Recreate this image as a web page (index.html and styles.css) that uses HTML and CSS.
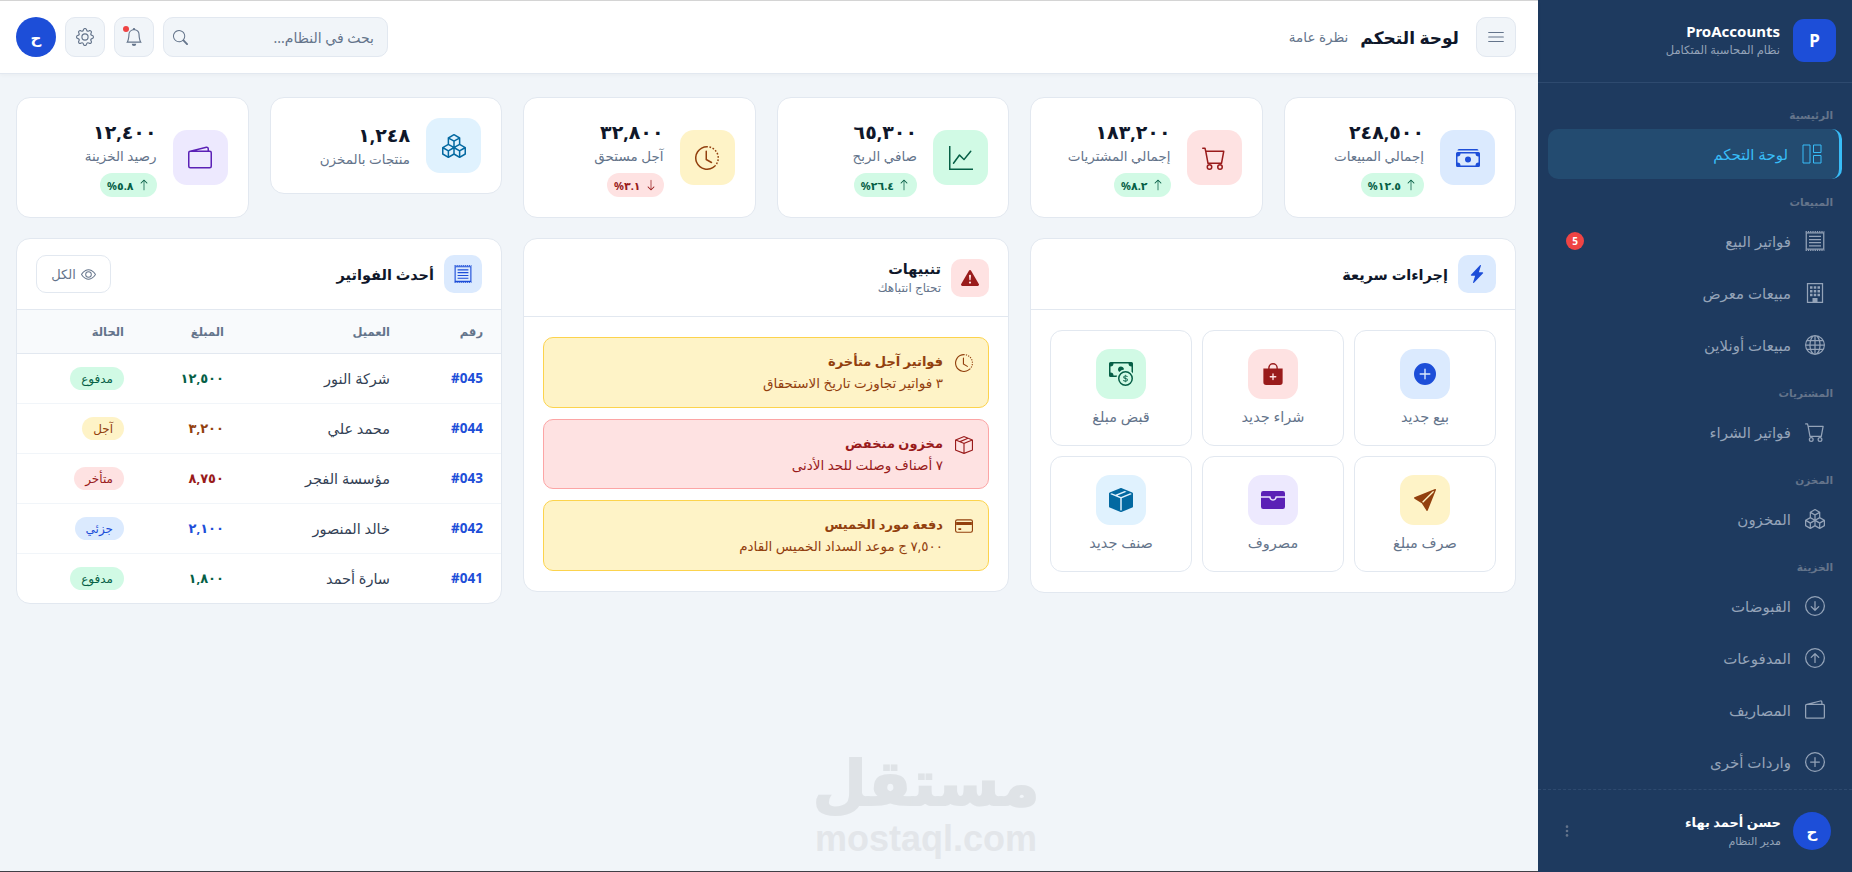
FILE: index.html
```html
<!DOCTYPE html>
<html lang="ar" dir="rtl">
<head>
  <meta charset="UTF-8">
  <meta name="viewport" content="width=device-width, initial-scale=1.0">
  <title>ProAccounts - لوحة التحكم</title>
  <link rel="stylesheet" href="styles.css">
</head>
<body>
  <!-- أيقونات -->
  <svg class="icon-defs" xmlns="http://www.w3.org/2000/svg">
    <symbol id="i-layout" viewBox="0 0 20 20"><path fill="none" stroke="currentColor" d="M1 1h7v18H1zM11.5 1H19v7.5h-7.5zM11.5 11.5H19V19h-7.5z"/></symbol>
    <symbol id="i-receipt" viewBox="0 0 16 16"><path fill="none" stroke="currentColor" d="M1 1.5h14v13H1z"/><path fill="none" stroke="currentColor" stroke-width="1.2" stroke-dasharray="1 .8" d="M.5 .6h15M.5 15.4h15"/><path fill="none" stroke="currentColor" d="M3.2 4.3h9.6M3.2 6.8h9.6M3.2 9.3h9.6M3.2 11.8h9.6"/></symbol>
    <symbol id="i-building" viewBox="0 0 16 16"><path fill="none" stroke="currentColor" d="M2 .5h12v15H2z"/><path fill="currentColor" d="M4 2.5h2v2H4zM7 2.5h2v2H7zM10 2.5h2v2h-2zM4 5.5h2v2H4zM7 5.5h2v2H7zM10 5.5h2v2h-2zM4 8.5h2v2H4zM7 8.5h2v2H7zM10 8.5h2v2h-2zM6 12h4v3.5H6z"/></symbol>
    <symbol id="i-globe" viewBox="0 0 16 16"><path fill="currentColor" d="M0 8a8 8 0 1 1 16 0A8 8 0 0 1 0 8zm7.5-6.923c-.67.204-1.335.82-1.887 1.855A7.97 7.97 0 0 0 5.145 4H7.5V1.077zM4.09 4a9.267 9.267 0 0 1 .64-1.539 6.7 6.7 0 0 1 .597-.933A7.025 7.025 0 0 0 2.255 4H4.09zm-.582 3.5c.03-.877.138-1.718.312-2.5H1.674a6.958 6.958 0 0 0-.656 2.5h2.49zM4.847 5a12.5 12.5 0 0 0-.338 2.5H7.5V5H4.847zM8.5 5v2.5h2.99a12.495 12.495 0 0 0-.337-2.5H8.5zM4.51 8.5a12.5 12.5 0 0 0 .337 2.5H7.5V8.5H4.51zm3.99 0V11h2.653c.187-.765.306-1.608.338-2.5H8.5zM5.145 12c.138.386.295.744.468 1.068.552 1.035 1.218 1.65 1.887 1.855V12H5.145zm.182 2.472a6.696 6.696 0 0 1-.597-.933A9.268 9.268 0 0 1 4.09 12H2.255a7.024 7.024 0 0 0 3.072 2.472zM3.82 11a13.652 13.652 0 0 1-.312-2.5h-2.49c.062.89.291 1.733.656 2.5H3.82zm6.853 3.472A7.024 7.024 0 0 0 13.745 12H11.91a9.27 9.27 0 0 1-.64 1.539 6.688 6.688 0 0 1-.597.933zM8.5 12v2.923c.67-.204 1.335-.82 1.887-1.855.173-.324.33-.682.468-1.068H8.5zm3.68-1h2.146c.365-.767.594-1.61.656-2.5h-2.49a13.65 13.65 0 0 1-.312 2.5zm2.802-3.5a6.959 6.959 0 0 0-.656-2.5H12.18c.174.782.282 1.623.312 2.5h2.49zM11.27 2.461c.247.464.462.98.64 1.539h1.835a7.024 7.024 0 0 0-3.072-2.472c.218.284.418.598.597.933zM10.855 4a7.966 7.966 0 0 0-.468-1.068C9.835 1.897 9.17 1.282 8.5 1.077V4h2.355z"/></symbol>
    <symbol id="i-cart" viewBox="0 0 16 16"><path fill="currentColor" d="M0 1.5A.5.5 0 0 1 .5 1H2a.5.5 0 0 1 .485.379L2.89 3H14.5a.5.5 0 0 1 .491.592l-1.5 8A.5.5 0 0 1 13 12H4a.5.5 0 0 1-.491-.408L2.01 3.607 1.61 2H.5a.5.5 0 0 1-.5-.5zM3.102 4l1.313 7h8.17l1.313-7H3.102zM5 12a2 2 0 1 0 0 4 2 2 0 0 0 0-4zm7 0a2 2 0 1 0 0 4 2 2 0 0 0 0-4zm-7 1a1 1 0 1 1 0 2 1 1 0 0 1 0-2zm7 0a1 1 0 1 1 0 2 1 1 0 0 1 0-2z"/></symbol>
    <symbol id="i-boxes" viewBox="0 0 16 16"><path fill="currentColor" d="M7.752.066a.5.5 0 0 1 .496 0l3.75 2.143a.5.5 0 0 1 .252.434v3.995l3.498 2A.5.5 0 0 1 16 9.07v4.286a.5.5 0 0 1-.252.434l-3.75 2.143a.5.5 0 0 1-.496 0l-3.502-2-3.502 2.001a.5.5 0 0 1-.496 0l-3.75-2.143A.5.5 0 0 1 0 13.357V9.071a.5.5 0 0 1 .252-.434L3.75 6.638V2.643a.5.5 0 0 1 .252-.434L7.752.066ZM4.25 7.504 1.508 9.071l2.742 1.567 2.742-1.567L4.25 7.504ZM7.5 9.933l-2.75 1.571v3.134l2.75-1.571V9.933Zm1 3.134 2.75 1.571v-3.134L8.5 9.933v3.134Zm.508-3.996 2.742 1.567 2.742-1.567-2.742-1.567-2.742 1.567Zm2.242-2.433V3.504L8.5 5.076V8.21l2.75-1.572ZM7.5 8.21V5.076L4.75 3.504v3.134L7.5 8.21ZM5.258 2.643 8 4.21l2.742-1.567L8 1.076 5.258 2.643ZM15 9.933l-2.75 1.571v3.134L15 13.067V9.933ZM3.75 14.638v-3.134L1 9.933v3.134l2.75 1.571Z"/></symbol>
    <symbol id="i-down-circle" viewBox="0 0 16 16"><path fill="currentColor" d="M1 8a7 7 0 1 0 14 0A7 7 0 0 0 1 8zm15 0A8 8 0 1 1 0 8a8 8 0 0 1 16 0zM8.5 4.5a.5.5 0 0 0-1 0v5.793L5.354 8.146a.5.5 0 1 0-.708.708l3 3a.5.5 0 0 0 .708 0l3-3a.5.5 0 0 0-.708-.708L8.5 10.293V4.5z"/></symbol>
    <symbol id="i-up-circle" viewBox="0 0 16 16"><path fill="currentColor" d="M1 8a7 7 0 1 0 14 0A7 7 0 0 0 1 8zm15 0A8 8 0 1 1 0 8a8 8 0 0 1 16 0zm-7.5 3.5a.5.5 0 0 1-1 0V5.707L5.354 7.854a.5.5 0 1 1-.708-.708l3-3a.5.5 0 0 1 .708 0l3 3a.5.5 0 0 1-.708.708L8.5 5.707V11.5z"/></symbol>
    <symbol id="i-plus-circle" viewBox="0 0 16 16"><path fill="currentColor" d="M8 15A7 7 0 1 1 8 1a7 7 0 0 1 0 14zm0 1A8 8 0 1 0 8 0a8 8 0 0 0 0 16z"/><path fill="currentColor" d="M8 4a.5.5 0 0 1 .5.5v3h3a.5.5 0 0 1 0 1h-3v3a.5.5 0 0 1-1 0v-3h-3a.5.5 0 0 1 0-1h3v-3A.5.5 0 0 1 8 4z"/></symbol>
    <symbol id="i-wallet" viewBox="0 0 16 16"><path fill="currentColor" d="M12.136.326A1.5 1.5 0 0 1 14 1.78V3h.5A1.5 1.5 0 0 1 16 4.5v9a1.5 1.5 0 0 1-1.5 1.5h-13A1.5 1.5 0 0 1 0 13.5v-9a1.5 1.5 0 0 1 1.432-1.499L12.136.326zM5.562 3H13V1.78a.5.5 0 0 0-.621-.484L5.562 3zM1.5 4a.5.5 0 0 0-.5.5v9a.5.5 0 0 0 .5.5h13a.5.5 0 0 0 .5-.5v-9a.5.5 0 0 0-.5-.5h-13z"/></symbol>
    <symbol id="i-bell" viewBox="0 0 16 16"><path fill="currentColor" d="M8 16a2 2 0 0 0 2-2H6a2 2 0 0 0 2 2zM8 1.918l-.797.161A4.002 4.002 0 0 0 4 6c0 .628-.134 2.197-.459 3.742-.16.767-.376 1.566-.663 2.258h10.244c-.287-.692-.502-1.49-.663-2.258C12.134 8.197 12 6.628 12 6a4.002 4.002 0 0 0-3.203-3.92L8 1.917zM14.22 12c.223.447.481.801.78 1H1c.299-.199.557-.553.78-1C2.68 10.2 3 6.88 3 6c0-2.42 1.72-4.44 4.005-4.901a1 1 0 1 1 1.99 0A5.002 5.002 0 0 1 13 6c0 .88.32 4.2 1.22 6z"/></symbol>
    <symbol id="i-gear" viewBox="0 0 16 16"><path fill="currentColor" d="M8 4.754a3.246 3.246 0 1 0 0 6.492 3.246 3.246 0 0 0 0-6.492zM5.754 8a2.246 2.246 0 1 1 4.492 0 2.246 2.246 0 0 1-4.492 0z"/><path fill="currentColor" d="M9.796 1.343c-.527-1.79-3.065-1.79-3.592 0l-.094.319a.873.873 0 0 1-1.255.52l-.292-.16c-1.64-.892-3.433.902-2.54 2.541l.159.292a.873.873 0 0 1-.52 1.255l-.319.094c-1.79.527-1.79 3.065 0 3.592l.319.094a.873.873 0 0 1 .52 1.255l-.16.292c-.892 1.64.901 3.434 2.541 2.54l.292-.159a.873.873 0 0 1 1.255.52l.094.319c.527 1.79 3.065 1.79 3.592 0l.094-.319a.873.873 0 0 1 1.255-.52l.292.16c1.64.893 3.434-.902 2.54-2.541l-.159-.292a.873.873 0 0 1 .52-1.255l.319-.094c1.79-.527 1.79-3.065 0-3.592l-.319-.094a.873.873 0 0 1-.52-1.255l.16-.292c.893-1.64-.902-3.433-2.541-2.54l-.292.159a.873.873 0 0 1-1.255-.52l-.094-.319zm-2.633.283c.246-.835 1.428-.835 1.674 0l.094.319a1.873 1.873 0 0 0 2.693 1.115l.291-.16c.764-.415 1.6.42 1.184 1.185l-.159.292a1.873 1.873 0 0 0 1.116 2.692l.318.094c.835.246.835 1.428 0 1.674l-.319.094a1.873 1.873 0 0 0-1.115 2.693l.16.291c.415.764-.42 1.6-1.185 1.184l-.291-.159a1.873 1.873 0 0 0-2.693 1.116l-.094.318c-.246.835-1.428.835-1.674 0l-.094-.319a1.873 1.873 0 0 0-2.692-1.115l-.292.16c-.764.415-1.6-.42-1.184-1.185l.159-.291A1.873 1.873 0 0 0 1.945 8.93l-.319-.094c-.835-.246-.835-1.428 0-1.674l.319-.094A1.873 1.873 0 0 0 3.06 4.377l-.16-.292c-.415-.764.42-1.6 1.185-1.184l.292.159a1.873 1.873 0 0 0 2.692-1.115l.094-.319z"/></symbol>
    <symbol id="i-search" viewBox="0 0 16 16"><path fill="currentColor" d="M11.742 10.344a6.5 6.5 0 1 0-1.397 1.398h-.001c.03.04.062.078.098.115l3.85 3.85a1 1 0 0 0 1.415-1.414l-3.85-3.85a1.007 1.007 0 0 0-.115-.1zM12 6.5a5.5 5.5 0 1 1-11 0 5.5 5.5 0 0 1 11 0z"/></symbol>
    <symbol id="i-list" viewBox="0 0 16 16"><path fill="currentColor" d="M1 12a.5.5 0 0 1 .5-.5h13a.5.5 0 0 1 0 1h-13A.5.5 0 0 1 1 12zm0-4a.5.5 0 0 1 .5-.5h13a.5.5 0 0 1 0 1h-13A.5.5 0 0 1 1 8zm0-4a.5.5 0 0 1 .5-.5h13a.5.5 0 0 1 0 1h-13A.5.5 0 0 1 1 4z"/></symbol>
    <symbol id="i-graph" viewBox="0 0 16 16"><path fill="currentColor" d="M0 0h1v15h15v1H0V0Zm14.817 3.113a.5.5 0 0 1 .07.704l-4.5 5.5a.5.5 0 0 1-.74.037L7.06 6.767l-3.656 5.027a.5.5 0 0 1-.808-.588l4-5.5a.5.5 0 0 1 .758-.06l2.609 2.61 4.15-5.073a.5.5 0 0 1 .704-.07Z"/></symbol>
    <symbol id="i-clock" viewBox="0 0 16 16"><path fill="currentColor" d="M8.515 1.019A7 7 0 0 0 8 1V0a8 8 0 0 1 .589.022l-.074.997zm2.004.45a7.003 7.003 0 0 0-.985-.299l.219-.976c.383.086.76.2 1.126.342l-.36.933zm1.37.71a7.01 7.01 0 0 0-.439-.27l.493-.87a8.025 8.025 0 0 1 .979.654l-.615.789a6.996 6.996 0 0 0-.418-.302zm1.834 1.79a6.99 6.99 0 0 0-.653-.796l.724-.69c.27.285.52.59.747.91l-.818.576zm.744 1.352a7.08 7.08 0 0 0-.214-.468l.893-.45a7.976 7.976 0 0 1 .45 1.088l-.95.313a7.023 7.023 0 0 0-.179-.483zm.53 2.507a6.991 6.991 0 0 0-.1-1.025l.985-.17c.067.386.106.778.116 1.17l-1 .025zm-.131 1.538c.033-.17.06-.339.081-.51l.993.123a7.957 7.957 0 0 1-.23 1.155l-.964-.267c.046-.165.086-.332.12-.501zm-.952 2.379c.184-.29.346-.594.486-.908l.914.405c-.16.36-.345.706-.555 1.038l-.845-.535zm-.964 1.205c.122-.122.239-.248.35-.378l.758.653a8.073 8.073 0 0 1-.401.432l-.707-.707z"/><path fill="currentColor" d="M8 1a7 7 0 1 0 4.95 11.95l.707.707A8.001 8.001 0 1 1 8 0v1z"/><path fill="currentColor" d="M7.5 3a.5.5 0 0 1 .5.5v5.21l3.248 1.856a.5.5 0 0 1-.496.868l-3.5-2A.5.5 0 0 1 7 9V3.5a.5.5 0 0 1 .5-.5z"/></symbol>
    <symbol id="i-cash" viewBox="0 0 16 16"><path fill="currentColor" d="M1 3a1 1 0 0 1 1-1h12a1 1 0 0 1 1 1H1zm7 8a2 2 0 1 0 0-4 2 2 0 0 0 0 4z"/><path fill="currentColor" d="M0 5a1 1 0 0 1 1-1h14a1 1 0 0 1 1 1v8a1 1 0 0 1-1 1H1a1 1 0 0 1-1-1V5zm3 0a2 2 0 0 1-2 2v4a2 2 0 0 1 2 2h10a2 2 0 0 1 2-2V7a2 2 0 0 1-2-2H3z"/></symbol>
    <symbol id="i-warning" viewBox="0 0 16 16"><path fill="currentColor" d="M8.982 1.566a1.13 1.13 0 0 0-1.96 0L.165 13.233c-.457.778.091 1.767.98 1.767h13.713c.889 0 1.438-.99.98-1.767L8.982 1.566zM8 5c.535 0 .954.462.9.995l-.35 3.507a.552.552 0 0 1-1.1 0L7.1 5.995A.905.905 0 0 1 8 5zm.002 6a1 1 0 1 1 0 2 1 1 0 0 1 0-2z"/></symbol>
    <symbol id="i-bolt" viewBox="0 0 16 16"><path fill="currentColor" d="M11.251.068a.5.5 0 0 1 .227.58L9.677 6.5H13a.5.5 0 0 1 .364.843l-8 8.5a.5.5 0 0 1-.842-.49L6.323 9.5H3a.5.5 0 0 1-.364-.843l8-8.5a.5.5 0 0 1 .615-.09z"/></symbol>
    <symbol id="i-plus-fill" viewBox="0 0 16 16"><path fill="currentColor" d="M16 8A8 8 0 1 1 0 8a8 8 0 0 1 16 0zM8.5 4.5a.5.5 0 0 0-1 0v3h-3a.5.5 0 0 0 0 1h3v3a.5.5 0 0 0 1 0v-3h3a.5.5 0 0 0 0-1h-3v-3z"/></symbol>
    <symbol id="i-bag" viewBox="0 0 16 16"><path fill="currentColor" fill-rule="evenodd" d="M10.5 3.5a2.5 2.5 0 0 0-5 0V4h5v-.5zm1 0V4H15v10a2 2 0 0 1-2 2H3a2 2 0 0 1-2-2V4h3.5v-.5a3.5 3.5 0 1 1 7 0zM8.5 8a.5.5 0 0 0-1 0v1.5H6a.5.5 0 0 0 0 1h1.5V12a.5.5 0 0 0 1 0v-1.5H10a.5.5 0 0 0 0-1H8.5V8z"/></symbol>
    <symbol id="i-coin" viewBox="0 0 16 16"><path fill="currentColor" fill-rule="evenodd" d="M11 15a4 4 0 1 0 0-8 4 4 0 0 0 0 8zm5-4a5 5 0 1 1-10 0 5 5 0 0 1 10 0z"/><path fill="currentColor" d="M9.438 11.944c.047.596.518 1.06 1.363 1.116v.44h.375v-.443c.875-.061 1.386-.529 1.386-1.207 0-.618-.39-.936-1.09-1.1l-.296-.07v-1.2c.376.043.614.248.671.532h.658c-.047-.575-.54-1.024-1.329-1.073V8.5h-.375v.45c-.747.073-1.255.522-1.255 1.158 0 .562.378.92 1.007 1.066l.248.061v1.272c-.384-.058-.639-.27-.696-.563h-.668zm1.36-1.354c-.369-.085-.569-.26-.569-.522 0-.294.216-.514.572-.578v1.1h-.003zm.432.746c.449.104.655.272.655.569 0 .339-.257.571-.709.635v-1.195l.054.012z"/><path fill="currentColor" d="M1 0a1 1 0 0 0-1 1v8a1 1 0 0 0 1 1h4.083c.058-.344.145-.678.258-1H3a2 2 0 0 0-2-2V3a2 2 0 0 0 2-2h10a2 2 0 0 0 2 2v3.528c.38.34.717.728 1 1.154V1a1 1 0 0 0-1-1H1z"/><path fill="currentColor" d="M9.998 5.083 10 5a2 2 0 1 0-3.132 1.65 5.982 5.982 0 0 1 3.13-1.567z"/></symbol>
    <symbol id="i-send" viewBox="0 0 16 16"><path fill="currentColor" d="M15.964.686a.5.5 0 0 0-.65-.65L.767 5.855H.766l-.452.18a.5.5 0 0 0-.082.887l.41.26.001.002 4.995 3.178 3.178 4.995.002.002.26.41a.5.5 0 0 0 .886-.083l6-15Zm-1.833 1.89L6.637 10.07l-.215-.338a.5.5 0 0 0-.154-.154l-.338-.215 7.494-7.494 1.178-.471-.47 1.178Z"/></symbol>
    <symbol id="i-wallet-fill" viewBox="0 0 16 16"><path fill="currentColor" d="M1.5 2A1.5 1.5 0 0 0 0 3.5v2h6a.5.5 0 0 1 .5.5c0 .253.08.644.306.958.207.288.557.542 1.194.542.637 0 .987-.254 1.194-.542.226-.314.306-.705.306-.958a.5.5 0 0 1 .5-.5h6v-2A1.5 1.5 0 0 0 14.5 2h-13z"/><path fill="currentColor" d="M16 6.5h-5.551a2.678 2.678 0 0 1-.443 1.042C9.613 8.088 8.963 8.5 8 8.5c-.963 0-1.613-.412-2.006-.958A2.679 2.679 0 0 1 5.551 6.5H0v6A1.5 1.5 0 0 0 1.5 14h13a1.5 1.5 0 0 0 1.5-1.5v-6z"/></symbol>
    <symbol id="i-box-fill" viewBox="0 0 16 16"><path fill="currentColor" fill-rule="evenodd" d="M15.528 2.973a.75.75 0 0 1 .472.696v8.662a.75.75 0 0 1-.472.696l-7.25 2.9a.75.75 0 0 1-.557 0l-7.25-2.9A.75.75 0 0 1 0 12.331V3.669a.75.75 0 0 1 .471-.696L7.443.184l.01-.003.268-.108a.75.75 0 0 1 .558 0l.269.108.01.003 6.97 2.789ZM10.404 2 4.25 4.461 1.846 3.5 1 3.839v.4l6.5 2.6v7.922l.5.2.5-.2V6.84l6.5-2.6v-.4l-.846-.339L8 5.961 5.596 5l6.154-2.461L10.404 2Z"/></symbol>
    <symbol id="i-box" viewBox="0 0 16 16"><path fill="currentColor" d="M8.186 1.113a.5.5 0 0 0-.372 0L1.846 3.5l2.404.961L10.404 2l-2.218-.887zm3.564 1.426L5.596 5 8 5.961 14.154 3.5l-2.404-.961zm3.25 1.7-6.5 2.6v7.922l6.5-2.6V4.24zM7.5 14.762V6.838L1 4.239v7.925l6.5 2.6zM7.443.184a1.5 1.5 0 0 1 1.114 0l7.129 2.852A.5.5 0 0 1 16 3.5v8.662a1 1 0 0 1-.629.928l-7.185 2.874a.5.5 0 0 1-.372 0L.63 13.09a1 1 0 0 1-.63-.928V3.5a.5.5 0 0 1 .314-.464L7.443.184z"/></symbol>
    <symbol id="i-card" viewBox="0 0 16 16"><path fill="currentColor" d="M14 3a1 1 0 0 1 1 1v8a1 1 0 0 1-1 1H2a1 1 0 0 1-1-1V4a1 1 0 0 1 1-1h12zM2 2a2 2 0 0 0-2 2v8a2 2 0 0 0 2 2h12a2 2 0 0 0 2-2V4a2 2 0 0 0-2-2H2z"/><path fill="currentColor" d="M1 4.5h14V7H1zM3 10h2.5v1.5H3z"/></symbol>
    <symbol id="i-eye" viewBox="0 0 16 16"><path fill="currentColor" d="M16 8s-3-5.5-8-5.5S0 8 0 8s3 5.5 8 5.5S16 8 16 8zM1.173 8a13.133 13.133 0 0 1 1.66-2.043C4.12 4.668 5.88 3.5 8 3.5c2.12 0 3.879 1.168 5.168 2.457A13.133 13.133 0 0 1 14.828 8c-.058.087-.122.183-.195.288-.335.48-.83 1.12-1.465 1.755C11.879 11.332 10.119 12.5 8 12.5c-2.12 0-3.879-1.168-5.168-2.457A13.134 13.134 0 0 1 1.172 8z"/><path fill="currentColor" d="M8 5.5a2.5 2.5 0 1 0 0 5 2.5 2.5 0 0 0 0-5zM4.5 8a3.5 3.5 0 1 1 7 0 3.5 3.5 0 0 1-7 0z"/></symbol>
    <symbol id="i-arrow-up" viewBox="0 0 16 16"><path fill="currentColor" d="M8 15a.5.5 0 0 0 .5-.5V2.707l3.146 3.147a.5.5 0 0 0 .708-.708l-4-4a.5.5 0 0 0-.708 0l-4 4a.5.5 0 1 0 .708.708L7.5 2.707V14.5a.5.5 0 0 0 .5.5z"/></symbol>
    <symbol id="i-arrow-down" viewBox="0 0 16 16"><path fill="currentColor" d="M8 1a.5.5 0 0 1 .5.5v11.793l3.146-3.147a.5.5 0 0 1 .708.708l-4 4a.5.5 0 0 1-.708 0l-4-4a.5.5 0 0 1 .708-.708L7.5 13.293V1.5A.5.5 0 0 1 8 1z"/></symbol>
    <symbol id="i-dots" viewBox="0 0 4 16"><circle cx="2" cy="3" r="1.5" fill="currentColor"/><circle cx="2" cy="8" r="1.5" fill="currentColor"/><circle cx="2" cy="13" r="1.5" fill="currentColor"/></symbol>
  </svg>

  <div class="app">
    <!-- القائمة الجانبية -->
    <aside class="sidebar">
      <div class="brand">
        <div class="brand-logo">P</div>
        <div class="brand-text">
          <div class="brand-name" dir="ltr">ProAccounts</div>
          <div class="brand-sub">نظام المحاسبة المتكامل</div>
        </div>
      </div>

      <nav class="nav">
        <div class="nav-label">الرئيسية</div>
        <a class="nav-item active"><svg class="nav-icon"><use href="#i-layout"/></svg><span>لوحة التحكم</span></a>

        <div class="nav-label">المبيعات</div>
        <a class="nav-item"><svg class="nav-icon"><use href="#i-receipt"/></svg><span>فواتير البيع</span><b class="nav-badge">5</b></a>
        <a class="nav-item"><svg class="nav-icon"><use href="#i-building"/></svg><span>مبيعات معرض</span></a>
        <a class="nav-item"><svg class="nav-icon"><use href="#i-globe"/></svg><span>مبيعات أونلاين</span></a>

        <div class="nav-label">المشتريات</div>
        <a class="nav-item"><svg class="nav-icon"><use href="#i-cart"/></svg><span>فواتير الشراء</span></a>

        <div class="nav-label">المخزن</div>
        <a class="nav-item"><svg class="nav-icon"><use href="#i-boxes"/></svg><span>المخزون</span></a>

        <div class="nav-label">الخزينة</div>
        <a class="nav-item"><svg class="nav-icon"><use href="#i-down-circle"/></svg><span>القبوضات</span></a>
        <a class="nav-item"><svg class="nav-icon"><use href="#i-up-circle"/></svg><span>المدفوعات</span></a>
        <a class="nav-item"><svg class="nav-icon"><use href="#i-wallet"/></svg><span>المصاريف</span></a>
        <a class="nav-item"><svg class="nav-icon"><use href="#i-plus-circle"/></svg><span>واردات أخرى</span></a>
      </nav>

      <div class="user-box">
        <div class="user-avatar">ح</div>
        <div class="user-text">
          <div class="user-name">حسن أحمد بهاء</div>
          <div class="user-role">مدير النظام</div>
        </div>
        <svg class="user-dots"><use href="#i-dots"/></svg>
      </div>
    </aside>

    <div class="main">
      <!-- الشريط العلوي -->
      <header class="topbar">
        <button class="btn-square"><svg class="icon-18"><use href="#i-list"/></svg></button>
        <h1 class="page-title">لوحة التحكم</h1>
        <span class="page-sub">نظرة عامة</span>
        <div class="topbar-tools">
          <div class="search-box">
            <span>بحث في النظام...</span>
            <svg class="icon-15"><use href="#i-search"/></svg>
          </div>
          <button class="btn-square bell"><svg class="icon-18"><use href="#i-bell"/></svg><i class="bell-dot"></i></button>
          <button class="btn-square"><svg class="icon-18"><use href="#i-gear"/></svg></button>
          <div class="top-avatar">ح</div>
        </div>
      </header>

      <main class="content">
        <!-- البطاقات -->
        <section class="stats">
          <div class="stat-card">
            <div class="stat-icon c-blue"><svg class="icon-24"><use href="#i-cash"/></svg></div>
            <div>
              <div class="stat-value">٢٤٨,٥٠٠</div>
              <div class="stat-label">إجمالي المبيعات</div>
              <div class="trend up"><svg class="icon-12"><use href="#i-arrow-up"/></svg>١٢.٥%</div>
            </div>
          </div>
          <div class="stat-card">
            <div class="stat-icon c-red"><svg class="icon-24"><use href="#i-cart"/></svg></div>
            <div>
              <div class="stat-value">١٨٣,٢٠٠</div>
              <div class="stat-label">إجمالي المشتريات</div>
              <div class="trend up"><svg class="icon-12"><use href="#i-arrow-up"/></svg>٨.٢%</div>
            </div>
          </div>
          <div class="stat-card">
            <div class="stat-icon c-green"><svg class="icon-24"><use href="#i-graph"/></svg></div>
            <div>
              <div class="stat-value">٦٥,٣٠٠</div>
              <div class="stat-label">صافي الربح</div>
              <div class="trend up"><svg class="icon-12"><use href="#i-arrow-up"/></svg>٢٦.٤%</div>
            </div>
          </div>
          <div class="stat-card">
            <div class="stat-icon c-amber"><svg class="icon-24"><use href="#i-clock"/></svg></div>
            <div>
              <div class="stat-value">٣٢,٨٠٠</div>
              <div class="stat-label">آجل مستحق</div>
              <div class="trend down"><svg class="icon-12"><use href="#i-arrow-down"/></svg>٣.١%</div>
            </div>
          </div>
          <div class="stat-card">
            <div class="stat-icon c-sky"><svg class="icon-24"><use href="#i-boxes"/></svg></div>
            <div>
              <div class="stat-value">١,٢٤٨</div>
              <div class="stat-label">منتجات بالمخزن</div>
            </div>
          </div>
          <div class="stat-card">
            <div class="stat-icon c-purple"><svg class="icon-24"><use href="#i-wallet"/></svg></div>
            <div>
              <div class="stat-value">١٢,٤٠٠</div>
              <div class="stat-label">رصيد الخزينة</div>
              <div class="trend up"><svg class="icon-12"><use href="#i-arrow-up"/></svg>٥.٨%</div>
            </div>
          </div>
        </section>

        <section class="panels">
          <!-- إجراءات سريعة -->
          <div class="panel">
            <div class="panel-head">
              <div class="panel-icon c-blue"><svg class="icon-18"><use href="#i-bolt"/></svg></div>
              <h2 class="panel-title">إجراءات سريعة</h2>
            </div>
            <div class="quick-grid">
              <div class="quick-item"><div class="quick-icon c-blue"><svg class="icon-22"><use href="#i-plus-fill"/></svg></div><span>بيع جديد</span></div>
              <div class="quick-item"><div class="quick-icon c-red"><svg class="icon-22"><use href="#i-bag"/></svg></div><span>شراء جديد</span></div>
              <div class="quick-item"><div class="quick-icon c-green"><svg class="icon-24"><use href="#i-coin"/></svg></div><span>قبض مبلغ</span></div>
              <div class="quick-item"><div class="quick-icon c-amber"><svg class="icon-22"><use href="#i-send"/></svg></div><span>صرف مبلغ</span></div>
              <div class="quick-item"><div class="quick-icon c-purple"><svg class="icon-24"><use href="#i-wallet-fill"/></svg></div><span>مصروف</span></div>
              <div class="quick-item"><div class="quick-icon c-sky"><svg class="icon-24"><use href="#i-box-fill"/></svg></div><span>صنف جديد</span></div>
            </div>
          </div>

          <!-- تنبيهات -->
          <div class="panel">
            <div class="panel-head alerts-head">
              <div class="panel-icon c-red"><svg class="icon-18"><use href="#i-warning"/></svg></div>
              <div>
                <h2 class="panel-title">تنبيهات</h2>
                <div class="panel-sub">تحتاج انتباهك</div>
              </div>
            </div>
            <div class="alerts">
              <div class="alert alert-amber">
                <svg class="icon-18"><use href="#i-clock"/></svg>
                <div><div class="alert-title">فواتير آجل متأخرة</div><div class="alert-text">٣ فواتير تجاوزت تاريخ الاستحقاق</div></div>
              </div>
              <div class="alert alert-red">
                <svg class="icon-18"><use href="#i-box"/></svg>
                <div><div class="alert-title">مخزون منخفض</div><div class="alert-text">٧ أصناف وصلت للحد الأدنى</div></div>
              </div>
              <div class="alert alert-amber">
                <svg class="icon-18"><use href="#i-card"/></svg>
                <div><div class="alert-title">دفعة مورد الخميس</div><div class="alert-text">٧,٥٠٠ ج موعد السداد الخميس القادم</div></div>
              </div>
            </div>
          </div>

          <!-- أحدث الفواتير -->
          <div class="panel">
            <div class="panel-head">
              <div class="panel-icon c-blue"><svg class="icon-18"><use href="#i-receipt"/></svg></div>
              <h2 class="panel-title">أحدث الفواتير</h2>
              <button class="btn-all"><svg class="icon-15"><use href="#i-eye"/></svg>الكل</button>
            </div>
            <table class="invoices">
              <thead>
                <tr><th class="col-no">رقم</th><th class="col-client">العميل</th><th class="col-amount">المبلغ</th><th>الحالة</th></tr>
              </thead>
              <tbody>
                <tr><td class="inv-no">#045</td><td>شركة النور</td><td class="amount t-green">١٢,٥٠٠</td><td><span class="status s-paid">مدفوع</span></td></tr>
                <tr><td class="inv-no">#044</td><td>محمد علي</td><td class="amount t-amber">٣,٢٠٠</td><td><span class="status s-credit">آجل</span></td></tr>
                <tr><td class="inv-no">#043</td><td>مؤسسة الفجر</td><td class="amount t-red">٨,٧٥٠</td><td><span class="status s-late">متأخر</span></td></tr>
                <tr><td class="inv-no">#042</td><td>خالد المنصور</td><td class="amount t-blue">٢,١٠٠</td><td><span class="status s-part">جزئي</span></td></tr>
                <tr><td class="inv-no">#041</td><td>سارة أحمد</td><td class="amount t-green">١,٨٠٠</td><td><span class="status s-paid">مدفوع</span></td></tr>
              </tbody>
            </table>
          </div>
        </section>
      </main>

      <!-- العلامة المائية -->
      <div class="watermark">
        <div class="watermark-ar">مستقل</div>
        <div class="watermark-en" dir="ltr">mostaql.com</div>
      </div>
    </div>
  </div>
</body>
</html>
```

FILE: styles.css
```css
/* عام */
* {
  box-sizing: border-box;
}

body {
  margin: 0;
  font-family: "Noto Sans", "DejaVu Sans", sans-serif;
  background-color: #f1f5f9;
  color: #0f172a;
  overflow: hidden;
}

.icon-defs {
  display: none;
}

.icon-12 { width: 12px; height: 12px; }
.icon-15 { width: 15px; height: 15px; }
.icon-18 { width: 18px; height: 18px; }
.icon-22 { width: 22px; height: 22px; }
.icon-24 { width: 24px; height: 24px; }

.app {
  display: flex;
  height: 872px;
}

/* ألوان الأيقونات */
.c-blue { background-color: #dbeafe; color: #1d4ed8; }
.c-red { background-color: #fee2e2; color: #991b1b; }
.c-green { background-color: #d1fae5; color: #065f46; }
.c-amber { background-color: #fef3c7; color: #92400e; }
.c-sky { background-color: #e0f2fe; color: #0369a1; }
.c-purple { background-color: #ede9fe; color: #5b21b6; }

/* القائمة الجانبية */
.sidebar {
  width: 314px;
  flex-shrink: 0;
  background-color: #1e3a5f;
  display: flex;
  flex-direction: column;
}

.brand {
  height: 83px;
  display: flex;
  align-items: center;
  gap: 13px;
  padding: 0 16px 2px;
  border-bottom: 1px solid #2e4a6f;
}

.brand-logo {
  width: 43px;
  height: 43px;
  border-radius: 11px;
  background-color: #1d4ed8;
  color: white;
  font-weight: bold;
  font-size: 17px;
  display: flex;
  align-items: center;
  justify-content: center;
}

.brand-name {
  color: white;
  font-size: 15px;
  font-weight: bold;
  line-height: 20px;
  text-align: right;
}

.brand-sub {
  color: #94a3b8;
  font-size: 11.5px;
  line-height: 18px;
}

.nav {
  flex: 1;
  padding: 24px 10px 0;
}

.nav-label {
  color: #64748b;
  font-size: 10.5px;
  font-weight: bold;
  line-height: 16px;
  padding: 0 9px;
  margin: 15px 0 6px;
}

.nav-label:first-child {
  margin-top: 0;
}

.nav-item {
  height: 50px;
  margin-bottom: 2px;
  display: flex;
  align-items: center;
  gap: 14px;
  padding-right: 17px;
  padding-left: 18px;
  border-radius: 10px;
  color: #94a3b8;
  font-size: 15px;
}

.nav-item.active {
  background-color: #234b70;
  color: #38bdf8;
  border-right: 3px solid #38bdf8;
}

.nav-icon {
  width: 20px;
  height: 20px;
  flex-shrink: 0;
}

.nav-badge {
  margin-right: auto;
  width: 18px;
  height: 18px;
  border-radius: 50%;
  background-color: #ef4444;
  color: white;
  font-size: 10px;
  display: flex;
  align-items: center;
  justify-content: center;
}

.user-box {
  height: 83px;
  border-top: 1px dashed #2e4a6f;
  display: flex;
  align-items: center;
  gap: 12px;
  padding: 0 21px 0 27px;
}

.user-avatar {
  width: 38px;
  height: 38px;
  border-radius: 50%;
  background-color: #1d4ed8;
  color: white;
  font-weight: bold;
  font-size: 15px;
  display: flex;
  align-items: center;
  justify-content: center;
}

.user-name {
  color: white;
  font-size: 13px;
  font-weight: bold;
  line-height: 20px;
}

.user-role {
  color: #94a3b8;
  font-size: 11px;
  line-height: 18px;
}

.user-dots {
  width: 4px;
  height: 14px;
  margin-right: auto;
  color: #64748b;
}

/* المنطقة الرئيسية */
.main {
  flex: 1;
  min-width: 0;
  position: relative;
  border-bottom: 1px solid #3f3f46;
}

.topbar {
  height: 74px;
  background-color: white;
  border-top: 1px solid #d4d4d4;
  border-bottom: 1px solid #e2e8f0;
  box-shadow: 0 1px 4px rgba(0, 0, 0, 0.04);
  display: flex;
  align-items: center;
  padding: 0 22px 0 16px;
}

.btn-square {
  width: 40px;
  height: 40px;
  border-radius: 10px;
  border: 1px solid #e2e8f0;
  background-color: #f1f5f9;
  color: #64748b;
  padding: 0;
  display: flex;
  align-items: center;
  justify-content: center;
  position: relative;
}

.page-title {
  margin: 0 17px 0 0;
  font-size: 17px;
  font-weight: bold;
}

.page-sub {
  margin-right: 12px;
  font-size: 13.5px;
  color: #64748b;
}

.topbar-tools {
  margin-right: auto;
  display: flex;
  align-items: center;
  gap: 9px;
}

.search-box {
  width: 225px;
  height: 40px;
  border-radius: 10px;
  border: 1px solid #e2e8f0;
  background-color: #f1f5f9;
  color: #64748b;
  font-size: 14px;
  display: flex;
  align-items: center;
  justify-content: space-between;
  padding: 0 13px 0 9px;
}

.bell-dot {
  position: absolute;
  top: 8px;
  left: 8px;
  width: 6px;
  height: 6px;
  border-radius: 50%;
  background-color: #ef4444;
}

.top-avatar {
  width: 40px;
  height: 40px;
  border-radius: 50%;
  background-color: #1d4ed8;
  color: white;
  font-weight: bold;
  font-size: 15px;
  display: flex;
  align-items: center;
  justify-content: center;
}

.content {
  padding: 23px 22px 0 16px;
}

/* البطاقات */
.stats {
  display: grid;
  grid-template-columns: repeat(6, 1fr);
  gap: 21px;
  align-items: start;
}

.stat-card {
  background-color: white;
  border: 1px solid #e2e8f0;
  border-radius: 14px;
  padding: 20px;
  display: flex;
  align-items: center;
  gap: 16px;
}

.stat-icon {
  width: 55px;
  height: 55px;
  flex-shrink: 0;
  border-radius: 14px;
  display: flex;
  align-items: center;
  justify-content: center;
}

.stat-value {
  font-size: 19px;
  font-weight: bold;
  line-height: 28px;
}

.stat-label {
  font-size: 13.5px;
  color: #64748b;
  line-height: 21px;
}

.trend {
  display: flex;
  width: fit-content;
  align-items: center;
  gap: 4px;
  height: 24px;
  margin-top: 6px;
  padding: 0 7px;
  border-radius: 12px;
  font-size: 11px;
  font-weight: bold;
}

.trend.up {
  background-color: #d1fae5;
  color: #065f46;
}

.trend.down {
  background-color: #fee2e2;
  color: #991b1b;
}

/* اللوحات */
.panels {
  display: grid;
  grid-template-columns: repeat(3, 1fr);
  gap: 21px;
  align-items: start;
  margin-top: 20px;
}

.panel {
  background-color: white;
  border: 1px solid #e2e8f0;
  border-radius: 14px;
  overflow: hidden;
}

.panel-head {
  height: 71px;
  padding: 0 19px;
  display: flex;
  align-items: center;
  gap: 10px;
  border-bottom: 1px solid #e2e8f0;
}

.alerts-head {
  height: 78px;
}

.panel-icon {
  width: 38px;
  height: 38px;
  border-radius: 10px;
  display: flex;
  align-items: center;
  justify-content: center;
}

.panel-title {
  margin: 0;
  font-size: 14.5px;
  font-weight: bold;
}

.panel-sub {
  font-size: 12px;
  color: #64748b;
  line-height: 20px;
}

.btn-all {
  margin-right: auto;
  width: 75px;
  height: 38px;
  border: 1px solid #e2e8f0;
  border-radius: 10px;
  background-color: white;
  color: #64748b;
  font-family: inherit;
  font-size: 13px;
  display: flex;
  align-items: center;
  justify-content: center;
  gap: 5px;
}

/* إجراءات سريعة */
.quick-grid {
  display: grid;
  grid-template-columns: repeat(3, 1fr);
  gap: 10px;
  padding: 20px 19px;
}

.quick-item {
  height: 116px;
  border: 1px solid #e2e8f0;
  border-radius: 12px;
  padding-top: 18px;
  display: flex;
  flex-direction: column;
  align-items: center;
  gap: 7px;
  font-size: 14.5px;
  color: #64748b;
}

.quick-icon {
  width: 50px;
  height: 50px;
  border-radius: 14px;
  display: flex;
  align-items: center;
  justify-content: center;
}

/* التنبيهات */
.alerts {
  display: flex;
  flex-direction: column;
  gap: 11px;
  padding: 20px 19px;
}

.alert {
  height: 70.5px;
  border-radius: 10px;
  border: 1px solid;
  padding: 0 15px;
  display: flex;
  align-items: center;
  gap: 12px;
}

.alert > svg {
  margin-top: -18px;
  flex-shrink: 0;
}

.alert-amber {
  background-color: #fef3c7;
  border-color: #fcd34d;
  color: #92400e;
}

.alert-red {
  background-color: #fee2e2;
  border-color: #fca5a5;
  color: #991b1b;
}

.alert-title {
  font-size: 13px;
  font-weight: bold;
  line-height: 22px;
}

.alert-text {
  font-size: 13.5px;
  line-height: 22px;
}

/* الجدول */
.invoices {
  width: 100%;
  table-layout: fixed;
  border-collapse: collapse;
}

.invoices th {
  height: 43px;
  background-color: #f8fafc;
  border-bottom: 1px solid #e2e8f0;
  color: #64748b;
  font-size: 11.5px;
  font-weight: bold;
  text-align: right;
  padding: 0 18px;
}

.col-no { width: 93px; }
.col-client { width: 166px; }
.col-amount { width: 100px; }

.invoices td {
  height: 50px;
  border-bottom: 1px solid #f1f5f9;
  font-size: 14.5px;
  padding: 0 18px;
  color: #334155;
}

.invoices tr:last-child td {
  border-bottom: none;
}

.invoices .inv-no {
  color: #1d4ed8;
  font-weight: bold;
  font-size: 13.5px;
}

.invoices .amount {
  font-weight: bold;
  font-size: 13px;
}

.invoices .t-green { color: #065f46; }
.invoices .t-amber { color: #92400e; }
.invoices .t-red { color: #991b1b; }
.invoices .t-blue { color: #1d4ed8; }

.status {
  display: inline-block;
  padding: 0 11px;
  height: 23px;
  line-height: 23px;
  border-radius: 12px;
  font-size: 12px;
  font-weight: 500;
}

.s-paid { background-color: #d1fae5; color: #065f46; }
.s-credit { background-color: #fef3c7; color: #92400e; }
.s-late { background-color: #fee2e2; color: #991b1b; }
.s-part { background-color: #dbeafe; color: #1d4ed8; }

/* العلامة المائية */
.watermark {
  position: absolute;
  left: 812px;
  top: 746px;
  width: 228px;
  text-align: center;
  color: #dfe3e7;
  font-weight: bold;
  pointer-events: none;
}

.watermark-ar {
  font-family: "DejaVu Sans", sans-serif;
  font-size: 62px;
  line-height: 76px;
  -webkit-text-stroke: 2px #dfe3e7;
}

.watermark-en {
  font-family: "Liberation Sans", sans-serif;
  font-size: 36px;
  line-height: 34px;
  color: #e3e6ea;
}
```
